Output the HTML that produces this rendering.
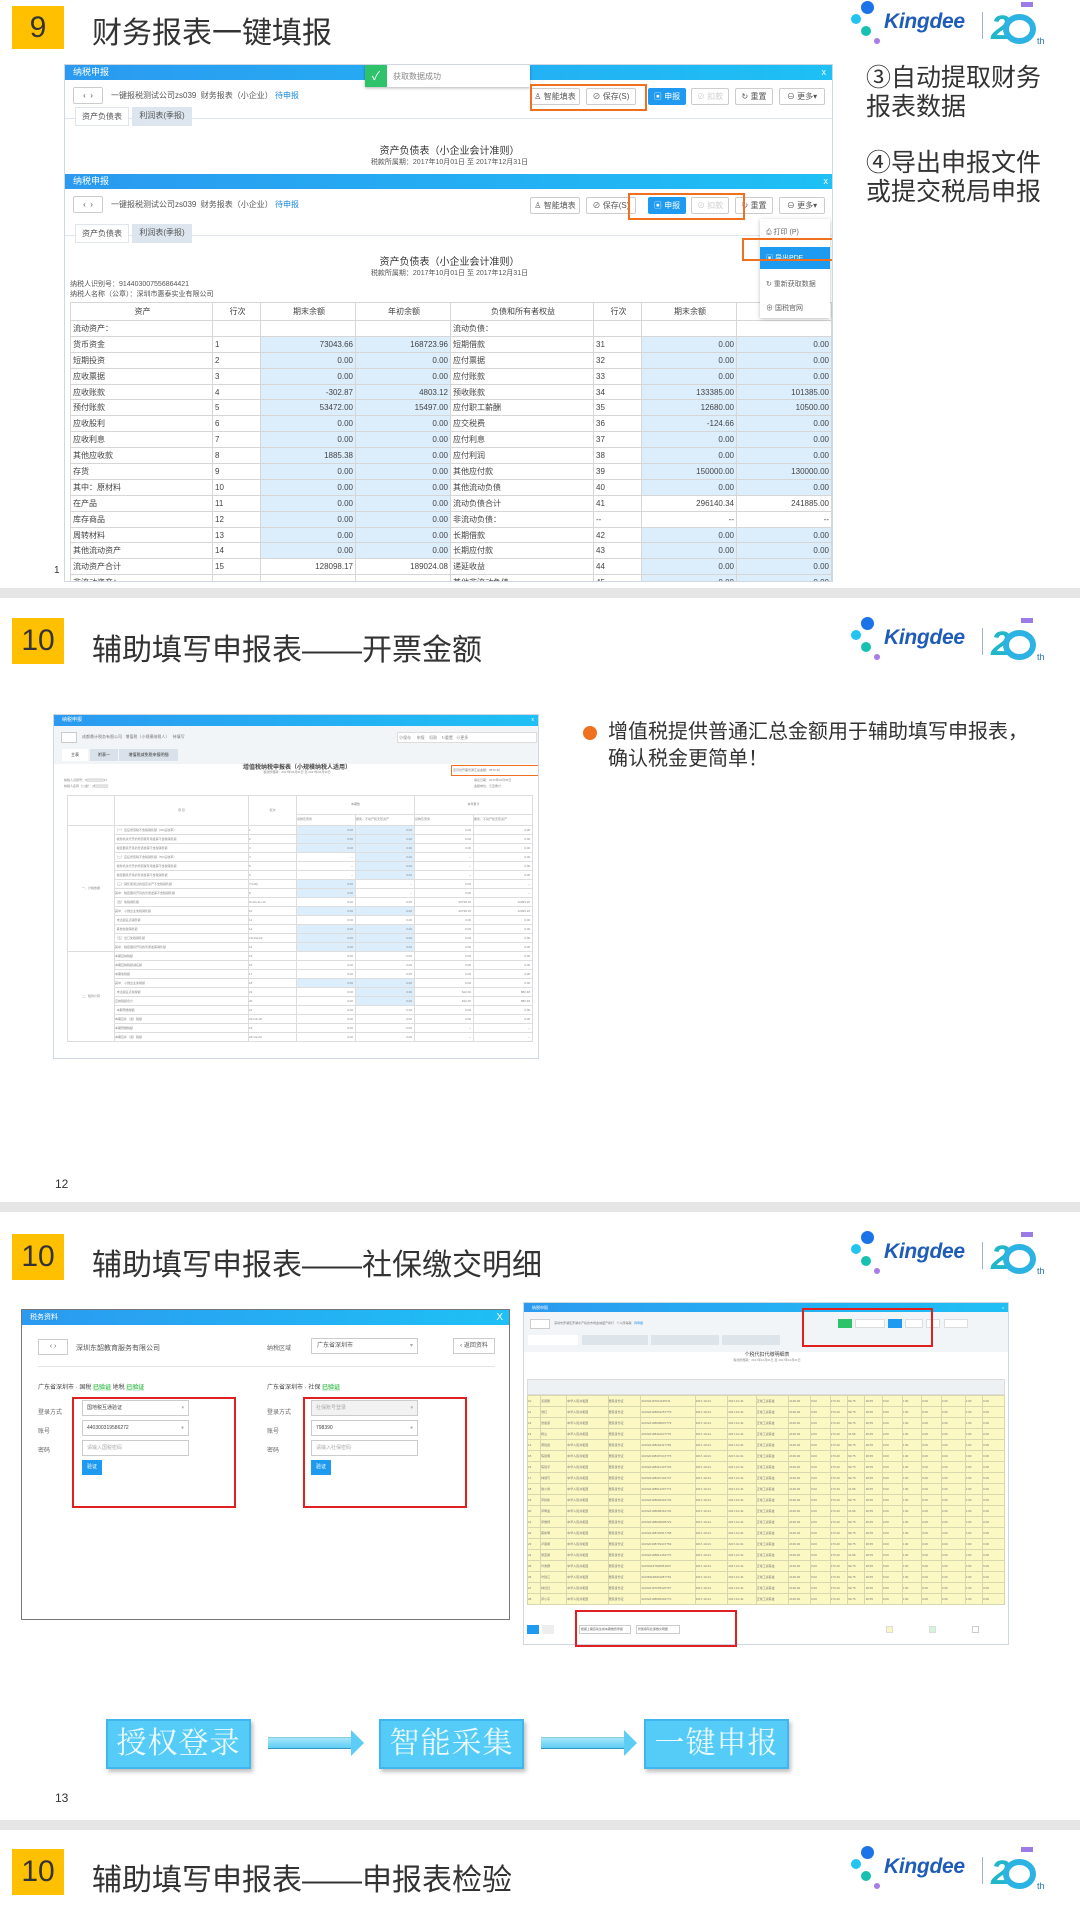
<!DOCTYPE html>
<html><head><meta charset="utf-8">
<style>
*{margin:0;padding:0;box-sizing:border-box}
body{width:1080px;height:1920px;background:#fff;position:relative;overflow:hidden;font-family:"Liberation Sans","Noto Sans CJK SC",sans-serif;color:#333}
.abs{position:absolute}
.num{position:absolute;left:12px;width:52px;background:#ffc000;color:#333;font-size:30px;display:flex;align-items:center;justify-content:center}
.title{position:absolute;left:92px;font-size:30px;color:#333}
.band{position:absolute;left:0;width:1080px;height:10px;background:#e6e6e6}
.logo{position:absolute;left:840px;width:240px;height:50px}
.logo .d{position:absolute;border-radius:50%}
.logo .k{position:absolute;left:44px;top:10px;font-size:21px;font-weight:bold;font-style:italic;color:#1f5cb8;letter-spacing:-0.3px}
.shot{position:absolute;border:1px solid #cfd8e0;background:#fff;overflow:hidden}
.bar{background:linear-gradient(90deg,#2b9af0,#1ec0f5);color:#fff;font-size:9px;padding-left:8px;position:absolute;left:0;right:0}
table{border-collapse:collapse;table-layout:fixed}
td{border:1px solid #d6d6d6;overflow:hidden;white-space:nowrap;padding:0}
.b{background:#dcedfc}
.r{text-align:right;padding-right:2px}
.t1 td{font-size:8px;height:15.9px;color:#444;padding-left:2px}
.t2 td{font-size:3px;line-height:3px;height:9px;color:#888;border-color:#ddd}
.t3 td{font-size:3px;line-height:3px;height:11px;color:#777;border-color:#d8d8b0;background:#fbf8c4}
.btn{position:absolute;height:17px;border:1px solid #ccc;border-radius:2px;font-size:8px;color:#555;background:#fff;text-align:center;line-height:15px}
.red{position:absolute;border:2px solid #e02020}
.org{position:absolute;border:2px solid #f07020}
.flow{position:absolute;top:1719px;width:145px;height:50px;background:#55cbf7;border:2px solid #3fb7ee;box-shadow:2px 3px 4px rgba(0,0,0,.25);color:#eafaff;font-size:30px;text-align:center;line-height:46px;font-family:"Liberation Serif","Noto Serif CJK SC",serif;letter-spacing:1px}
.arrow{position:absolute;top:1737px;height:12px;background:linear-gradient(#a8e6fb,#5ccdf5);border-top:1px solid #8cd;border-bottom:1px solid #39b}
.arrow:after{content:"";position:absolute;right:-12px;top:-8px;border-left:13px solid #5ccdf5;border-top:13px solid transparent;border-bottom:13px solid transparent}
.side{position:absolute;left:866px;font-size:25px;line-height:29px;color:#333}
</style></head><body>

<!-- ============ SLIDE 9 ============ -->
<div class="num" style="top:6px;height:43px">9</div>
<div class="title" style="top:8px">财务报表一键填报</div>
<div class="logo" style="top:0">
 <div class="d" style="left:21px;top:1px;width:13px;height:13px;background:#1a73e8"></div>
 <div class="d" style="left:11px;top:14px;width:10px;height:10px;background:#22c4f2"></div>
 <div class="d" style="left:21px;top:26px;width:10px;height:10px;background:#17c0b0"></div>
 <div class="d" style="left:34px;top:38px;width:6px;height:6px;background:#a77be8"></div>
 <div class="k">Kingdee</div>
 <div class="abs" style="left:142px;top:12px;width:1px;height:27px;background:#a0b4c8"></div>
 <div class="abs" style="left:151px;top:9px;font-size:34px;font-weight:bold;color:#21b6c8;font-style:italic">2</div>
 <div class="abs" style="left:163px;top:14px;width:33px;height:30px;border:6px solid #2cb3e4;border-radius:50%"></div>
 <div class="abs" style="left:181px;top:2px;width:12px;height:5px;background:#9b7be8"></div>
 <div class="abs" style="left:197px;top:36px;font-size:9px;color:#27a;">th</div>
</div>

<div class="shot" style="left:64px;top:64px;width:769px;height:518px">
 <div class="bar" style="top:0;height:15px;line-height:15px">纳税申报<span style="position:absolute;right:6px">x</span></div>
 <div class="btn" style="left:8px;top:22px;width:30px">‹ &nbsp;›</div>
 <div class="abs" style="left:46px;top:25px;font-size:8px;color:#555">一键报税测试公司zs039 &nbsp;财务报表（小企业） <span style="color:#1a8ae0">待申报</span></div>
 <div class="abs" style="left:300px;top:0;width:165px;height:22px;background:#fff;box-shadow:0 1px 3px rgba(0,0,0,.3)"><div style="width:22px;height:22px;background:#2ec36a;color:#fff;font-size:12px;text-align:center;line-height:22px">✓</div><div class="abs" style="left:28px;top:6px;font-size:8px;color:#888">获取数据成功</div></div>
 <div class="btn" style="left:465px;top:23px;width:50px">♙ 智能填表</div>
 <div class="btn" style="left:521px;top:23px;width:50px">⊘ 保存(S)</div>
 <div class="btn" style="left:583px;top:23px;width:38px;background:#1e9bf0;color:#fff;border-color:#1e9bf0">▣ 申报</div>
 <div class="btn" style="left:626px;top:23px;width:38px;color:#ccc">⊘ 扣款</div>
 <div class="btn" style="left:670px;top:23px;width:38px">↻ 重置</div>
 <div class="btn" style="left:714px;top:23px;width:46px">⊖ 更多▾</div>
 <div class="org" style="left:465px;top:19px;width:117px;height:27px"></div>
 <div class="abs" style="left:0;top:53px;width:769px;height:1px;background:#e0e6ec"></div>
 <div class="abs" style="left:10px;top:42px;width:54px;height:19px;background:#fff;border:1px solid #e0e6ec;font-size:8px;text-align:center;line-height:18px;color:#555">资产负债表</div>
 <div class="abs" style="left:67px;top:42px;width:60px;height:19px;background:#dde6ee;font-size:8px;text-align:center;line-height:18px;color:#555">利润表(季报)</div>
 <div class="abs" style="left:0;top:77px;width:769px;text-align:center;font-size:10px;color:#333">资产负债表（小企业会计准则）</div>
 <div class="abs" style="left:0;top:92px;width:769px;text-align:center;font-size:7px;color:#555">税款所属期：2017年10月01日 至 2017年12月31日</div>

 <div class="abs" style="left:0;top:109px;width:769px;height:409px;background:#fff">
  <div class="bar" style="top:0;height:15px;line-height:15px">纳税申报<span style="position:absolute;right:6px">x</span></div>
  <div class="btn" style="left:8px;top:22px;width:30px">‹ &nbsp;›</div>
  <div class="abs" style="left:46px;top:25px;font-size:8px;color:#555">一键报税测试公司zs039 &nbsp;财务报表（小企业） <span style="color:#1a8ae0">待申报</span></div>
  <div class="btn" style="left:465px;top:23px;width:50px">♙ 智能填表</div>
  <div class="btn" style="left:521px;top:23px;width:50px">⊘ 保存(S)</div>
  <div class="btn" style="left:583px;top:23px;width:38px;background:#1e9bf0;color:#fff;border-color:#1e9bf0">▣ 申报</div>
  <div class="btn" style="left:626px;top:23px;width:38px;color:#ccc">⊘ 扣款</div>
  <div class="btn" style="left:670px;top:23px;width:38px">↻ 重置</div>
  <div class="btn" style="left:714px;top:23px;width:46px">⊖ 更多▾</div>
  <div class="org" style="left:563px;top:19px;width:117px;height:27px"></div>
  <div class="abs" style="left:0;top:61px;width:769px;height:1px;background:#e0e6ec"></div>
  <div class="abs" style="left:10px;top:50px;width:54px;height:19px;background:#fff;border:1px solid #e0e6ec;font-size:8px;text-align:center;line-height:18px;color:#555">资产负债表</div>
  <div class="abs" style="left:67px;top:50px;width:60px;height:19px;background:#dde6ee;font-size:8px;text-align:center;line-height:18px;color:#555">利润表(季报)</div>
  <div class="abs" style="left:0;top:79px;width:769px;text-align:center;font-size:10px;color:#333">资产负债表（小企业会计准则）</div>
  <div class="abs" style="left:0;top:94px;width:769px;text-align:center;font-size:7px;color:#555">税款所属期：2017年10月01日 至 2017年12月31日</div>
  <div class="abs" style="left:5px;top:106px;font-size:7px;color:#555;line-height:10px">纳税人识别号：914403007556864421<br>纳税人名称（公章）：深圳市惠泰实业有限公司</div>
  <div class="abs" style="left:5px;top:128px">
  <table class="t1" style="width:761px">
   <colgroup><col style="width:142px"><col style="width:48px"><col style="width:95px"><col style="width:95px"><col style="width:143px"><col style="width:48px"><col style="width:95px"><col style="width:95px"></colgroup>
   <tr><td style="text-align:center;height:18px">资产</td><td style="text-align:center">行次</td><td style="text-align:center">期末余额</td><td style="text-align:center">年初余额</td><td style="text-align:center">负债和所有者权益</td><td style="text-align:center">行次</td><td style="text-align:center">期末余额</td><td style="text-align:center">年初余额</td></tr>
   <tr><td>流动资产：</td><td></td><td></td><td></td><td>流动负债：</td><td></td><td></td><td></td></tr>
   <tr><td>货币资金</td><td>1</td><td class="b r">73043.66</td><td class="b r">168723.96</td><td>短期借款</td><td>31</td><td class="b r">0.00</td><td class="b r">0.00</td></tr>
   <tr><td>短期投资</td><td>2</td><td class="b r">0.00</td><td class="b r">0.00</td><td>应付票据</td><td>32</td><td class="b r">0.00</td><td class="b r">0.00</td></tr>
   <tr><td>应收票据</td><td>3</td><td class="b r">0.00</td><td class="b r">0.00</td><td>应付账款</td><td>33</td><td class="b r">0.00</td><td class="b r">0.00</td></tr>
   <tr><td>应收账款</td><td>4</td><td class="b r">-302.87</td><td class="b r">4803.12</td><td>预收账款</td><td>34</td><td class="b r">133385.00</td><td class="b r">101385.00</td></tr>
   <tr><td>预付账款</td><td>5</td><td class="b r">53472.00</td><td class="b r">15497.00</td><td>应付职工薪酬</td><td>35</td><td class="b r">12680.00</td><td class="b r">10500.00</td></tr>
   <tr><td>应收股利</td><td>6</td><td class="b r">0.00</td><td class="b r">0.00</td><td>应交税费</td><td>36</td><td class="b r">-124.66</td><td class="b r">0.00</td></tr>
   <tr><td>应收利息</td><td>7</td><td class="b r">0.00</td><td class="b r">0.00</td><td>应付利息</td><td>37</td><td class="b r">0.00</td><td class="b r">0.00</td></tr>
   <tr><td>其他应收款</td><td>8</td><td class="b r">1885.38</td><td class="b r">0.00</td><td>应付利润</td><td>38</td><td class="b r">0.00</td><td class="b r">0.00</td></tr>
   <tr><td>存货</td><td>9</td><td class="b r">0.00</td><td class="b r">0.00</td><td>其他应付款</td><td>39</td><td class="b r">150000.00</td><td class="b r">130000.00</td></tr>
   <tr><td>其中：原材料</td><td>10</td><td class="b r">0.00</td><td class="b r">0.00</td><td>其他流动负债</td><td>40</td><td class="b r">0.00</td><td class="b r">0.00</td></tr>
   <tr><td>在产品</td><td>11</td><td class="b r">0.00</td><td class="b r">0.00</td><td>流动负债合计</td><td>41</td><td class="r">296140.34</td><td class="r">241885.00</td></tr>
   <tr><td>库存商品</td><td>12</td><td class="b r">0.00</td><td class="b r">0.00</td><td>非流动负债：</td><td>--</td><td class="r">--</td><td class="r">--</td></tr>
   <tr><td>周转材料</td><td>13</td><td class="b r">0.00</td><td class="b r">0.00</td><td>长期借款</td><td>42</td><td class="b r">0.00</td><td class="b r">0.00</td></tr>
   <tr><td>其他流动资产</td><td>14</td><td class="b r">0.00</td><td class="b r">0.00</td><td>长期应付款</td><td>43</td><td class="b r">0.00</td><td class="b r">0.00</td></tr>
   <tr><td>流动资产合计</td><td>15</td><td class="r">128098.17</td><td class="r">189024.08</td><td>递延收益</td><td>44</td><td class="b r">0.00</td><td class="b r">0.00</td></tr>
   <tr><td>非流动资产：</td><td>--</td><td class="r">--</td><td class="r">--</td><td>其他非流动负债</td><td>45</td><td class="b r">0.00</td><td class="b r">0.00</td></tr>
  </table></div>
  <div class="abs" style="left:695px;top:45px;width:70px;height:99px;background:#fff;box-shadow:0 1px 4px rgba(0,0,0,.25);font-size:7px;color:#666">
   <div style="padding:8px 6px">⎙ 打印 (P)</div>
   <div style="background:#1e9bf0;color:#fff;padding:6px 6px;margin-top:2px">▣ 导出PDF</div>
   <div style="padding:10px 6px 0">↻ 重新获取数据</div>
   <div style="padding:14px 6px 0">⊕ 国税官网</div>
  </div>
  <div class="org" style="left:677px;top:64px;width:116px;height:23px"></div>
 </div>
</div>
<div class="abs" style="left:54px;top:565px;font-size:10px">1</div>
<div class="side" style="top:64px">③自动提取财务<br>报表数据</div>
<div class="side" style="top:149px">④导出申报文件<br>或提交税局申报</div>

<div class="band" style="top:588px"></div>

<!-- ============ SLIDE 10a ============ -->
<div class="num" style="top:618px;height:46px">10</div>
<div class="title" style="top:625px">辅助填写申报表——开票金额</div>
<div class="logo" style="top:616px">
 <div class="d" style="left:21px;top:1px;width:13px;height:13px;background:#1a73e8"></div>
 <div class="d" style="left:11px;top:14px;width:10px;height:10px;background:#22c4f2"></div>
 <div class="d" style="left:21px;top:26px;width:10px;height:10px;background:#17c0b0"></div>
 <div class="d" style="left:34px;top:38px;width:6px;height:6px;background:#a77be8"></div>
 <div class="k">Kingdee</div>
 <div class="abs" style="left:142px;top:12px;width:1px;height:27px;background:#a0b4c8"></div>
 <div class="abs" style="left:151px;top:9px;font-size:34px;font-weight:bold;color:#21b6c8;font-style:italic">2</div>
 <div class="abs" style="left:163px;top:14px;width:33px;height:30px;border:6px solid #2cb3e4;border-radius:50%"></div>
 <div class="abs" style="left:181px;top:2px;width:12px;height:5px;background:#9b7be8"></div>
 <div class="abs" style="left:197px;top:36px;font-size:9px;color:#27a;">th</div>
</div>

<div class="shot" style="left:53px;top:714px;width:486px;height:345px">
 <div class="bar" style="top:0;height:11px;line-height:11px;font-size:5px">纳税申报<span style="position:absolute;right:4px">x</span></div>
 <div class="abs" style="left:0;top:11px;width:486px;height:38px;background:#f2f5f8"></div>
 <div class="abs" style="left:7px;top:17px;width:16px;height:11px;border:1px solid #ccc;background:#fff"></div>
 <div class="abs" style="left:28px;top:19px;font-size:4px;color:#777">成都鼎计税务有限公司 &nbsp; 增值税（小规模纳税人） &nbsp; 待填写</div>
 <div class="abs" style="left:343px;top:17px;width:140px;height:11px;border:1px solid #ddd;background:#fff;font-size:4px;color:#888;line-height:9px">&nbsp;⊘保存 &nbsp; &nbsp; 申报 &nbsp; &nbsp;扣款 &nbsp; &nbsp;↻重置 &nbsp; ⊖更多</div>
 <div class="abs" style="left:8px;top:34px;width:26px;height:12px;background:#fff;font-size:4px;text-align:center;line-height:12px">主表</div>
 <div class="abs" style="left:36px;top:34px;width:28px;height:12px;background:#d9e2ea;font-size:4px;text-align:center;line-height:12px">附表一</div>
 <div class="abs" style="left:65px;top:34px;width:59px;height:12px;background:#d9e2ea;font-size:4px;text-align:center;line-height:12px">增值税减免税申报明细</div>
 <div class="abs" style="left:0;top:47px;width:486px;text-align:center;font-size:6px;font-weight:bold;color:#444">增值税纳税申报表（小规模纳税人适用）</div>
 <div class="abs" style="left:0;top:55px;width:486px;text-align:center;font-size:3px;color:#888">税款所属期：2017年06月01日 至 2017年06月30日</div>
 <div class="org" style="left:397px;top:50px;width:90px;height:11px;border-width:1px"></div>
 <div class="abs" style="left:399px;top:53px;font-size:3px;color:#777">该月份开票普通汇总金额：3572.32</div>
 <div class="abs" style="left:10px;top:62px;font-size:3px;color:#888;line-height:6px">纳税人识别号：9▒▒▒▒▒▒▒▒97<br>纳税人名称（公章）：成▒▒▒▒▒▒</div>
 <div class="abs" style="left:420px;top:62px;font-size:3px;color:#888;line-height:6px">填表日期：2017年06月05日<br>金额单位：元至角分</div>
 <div class="abs" style="left:13px;top:80px">
 <table class="t2" style="width:465px">
  <colgroup><col style="width:47px"><col style="width:134px"><col style="width:48px"><col style="width:59px"><col style="width:59px"><col style="width:59px"><col style="width:59px"></colgroup>
  <tr><td rowspan="2" style="height:30px"></td><td rowspan="2" style="text-align:center">项 目</td><td rowspan="2" style="text-align:center">栏次</td><td colspan="2" style="text-align:center;height:15px">本期数</td><td colspan="2" style="text-align:center">本年累计</td></tr>
  <tr><td>货物及劳务</td><td>服务、不动产和无形资产</td><td>货物及劳务</td><td>服务、不动产和无形资产</td></tr>
  <tr><td rowspan="14" style="text-align:center">一、计税依据</td><td>（一）应征增值税不含税销售额（3%征收率）</td><td>1</td><td class="b r">0.00</td><td class="b r">0.00</td><td class="r">0.00</td><td class="r">0.00</td></tr>
  <tr><td>&nbsp; 税务机关代开的增值税专用发票不含税销售额</td><td>2</td><td class="b r">0.00</td><td class="b r">0.00</td><td class="r">0.00</td><td class="r">0.00</td></tr>
  <tr><td>&nbsp; 税控器具开具的普通发票不含税销售额</td><td>3</td><td class="b r">0.00</td><td class="b r">0.00</td><td class="r">0.00</td><td class="r">0.00</td></tr>
  <tr><td>（二）应征增值税不含税销售额（5%征收率）</td><td>4</td><td class="r">--</td><td class="b r">0.00</td><td class="r">--</td><td class="r">0.00</td></tr>
  <tr><td>&nbsp; 税务机关代开的增值税专用发票不含税销售额</td><td>5</td><td class="r">--</td><td class="b r">0.00</td><td class="r">--</td><td class="r">0.00</td></tr>
  <tr><td>&nbsp; 税控器具开具的普通发票不含税销售额</td><td>6</td><td class="r">--</td><td class="b r">0.00</td><td class="r">--</td><td class="r">0.00</td></tr>
  <tr><td>（三）销售使用过的固定资产不含税销售额</td><td>7(7≥8)</td><td class="b r">0.00</td><td class="r">--</td><td class="r">0.00</td><td class="r">--</td></tr>
  <tr><td>其中：税控器具开具的普通发票不含税销售额</td><td>8</td><td class="b r">0.00</td><td class="r">--</td><td class="r">0.00</td><td class="r">--</td></tr>
  <tr><td>（四）免税销售额</td><td>9=10+11+12</td><td class="r">0.00</td><td class="r">0.00</td><td class="r">29738.15</td><td class="r">10095.22</td></tr>
  <tr><td>其中：小微企业免税销售额</td><td>10</td><td class="b r">0.00</td><td class="b r">0.00</td><td class="r">29738.15</td><td class="r">10095.22</td></tr>
  <tr><td>&nbsp; 未达起征点销售额</td><td>11</td><td class="r">0.00</td><td class="r">0.00</td><td class="r">0.00</td><td class="r">0.00</td></tr>
  <tr><td>&nbsp; 其他免税销售额</td><td>12</td><td class="b r">0.00</td><td class="b r">0.00</td><td class="r">0.00</td><td class="r">0.00</td></tr>
  <tr><td>（五）出口免税销售额</td><td>13(13≥14)</td><td class="b r">0.00</td><td class="b r">0.00</td><td class="r">0.00</td><td class="r">0.00</td></tr>
  <tr><td>其中：税控器具开具的普通发票销售额</td><td>14</td><td class="b r">0.00</td><td class="b r">0.00</td><td class="r">0.00</td><td class="r">0.00</td></tr>
  <tr><td rowspan="10" style="text-align:center">二、税款计算</td><td>本期应纳税额</td><td>15</td><td class="r">0.00</td><td class="r">0.00</td><td class="r">0.00</td><td class="r">0.00</td></tr>
  <tr><td>本期应纳税额减征额</td><td>16</td><td class="r">0.00</td><td class="r">0.00</td><td class="r">0.00</td><td class="r">0.00</td></tr>
  <tr><td>本期免税额</td><td>17</td><td class="r">0.00</td><td class="r">0.00</td><td class="r">0.00</td><td class="r">0.00</td></tr>
  <tr><td>其中：小微企业免税额</td><td>18</td><td class="b r">0.00</td><td class="b r">0.00</td><td class="r">0.00</td><td class="r">0.00</td></tr>
  <tr><td>&nbsp; 未达起征点免税额</td><td>19</td><td class="r">0.00</td><td class="b r">0.00</td><td class="r">622.00</td><td class="r">880.48</td></tr>
  <tr><td>应纳税额合计</td><td>20</td><td class="r">0.00</td><td class="b r">0.00</td><td class="r">622.00</td><td class="r">880.48</td></tr>
  <tr><td>&nbsp; 本期预缴税额</td><td>21</td><td class="r">0.00</td><td class="r">0.00</td><td class="r">0.00</td><td class="r">0.00</td></tr>
  <tr><td>本期应补（退）税额</td><td>22=16-18</td><td class="r">0.00</td><td class="r">0.00</td><td class="r">0.00</td><td class="r">0.00</td></tr>
  <tr><td>本期预缴税额</td><td>23</td><td class="r">0.00</td><td class="r">0.00</td><td class="r">--</td><td class="r">--</td></tr>
  <tr><td>本期应补（退）税额</td><td>24=22-23</td><td class="r">0.00</td><td class="r">0.00</td><td class="r">--</td><td class="r">--</td></tr>
 </table></div>
</div>
<div class="abs" style="left:583px;top:726px;width:14px;height:14px;border-radius:50%;background:#f07020"></div>
<div class="abs" style="left:608px;top:719px;font-size:20px;line-height:27px;color:#333;width:420px">增值税提供普通汇总金额用于辅助填写申报表，确认税金更简单！</div>
<div class="abs" style="left:55px;top:1177px;font-size:12px">12</div>

<div class="band" style="top:1202px"></div>

<!-- ============ SLIDE 10b ============ -->
<div class="num" style="top:1234px;height:46px">10</div>
<div class="title" style="top:1240px">辅助填写申报表——社保缴交明细</div>
<div class="logo" style="top:1230px">
 <div class="d" style="left:21px;top:1px;width:13px;height:13px;background:#1a73e8"></div>
 <div class="d" style="left:11px;top:14px;width:10px;height:10px;background:#22c4f2"></div>
 <div class="d" style="left:21px;top:26px;width:10px;height:10px;background:#17c0b0"></div>
 <div class="d" style="left:34px;top:38px;width:6px;height:6px;background:#a77be8"></div>
 <div class="k">Kingdee</div>
 <div class="abs" style="left:142px;top:12px;width:1px;height:27px;background:#a0b4c8"></div>
 <div class="abs" style="left:151px;top:9px;font-size:34px;font-weight:bold;color:#21b6c8;font-style:italic">2</div>
 <div class="abs" style="left:163px;top:14px;width:33px;height:30px;border:6px solid #2cb3e4;border-radius:50%"></div>
 <div class="abs" style="left:181px;top:2px;width:12px;height:5px;background:#9b7be8"></div>
 <div class="abs" style="left:197px;top:36px;font-size:9px;color:#27a;">th</div>
</div>

<div class="shot" style="left:21px;top:1309px;width:489px;height:311px;border:1px solid #777">
 <div class="bar" style="top:0;height:15px;line-height:15px;font-size:7px">税务资料<span style="position:absolute;right:6px;font-size:10px">X</span></div>
 <div class="abs" style="left:16px;top:29px;width:30px;height:16px;border:1px solid #ccc;font-size:7px;text-align:center;line-height:14px;color:#666">‹ ›</div>
 <div class="abs" style="left:54px;top:33px;font-size:7px;color:#555">深圳东韶教育服务有限公司</div>
 <div class="abs" style="left:245px;top:33px;font-size:6px;color:#666">纳税区域</div>
 <div class="abs" style="left:289px;top:28px;width:107px;height:16px;border:1px solid #ccc;font-size:6px;color:#555;line-height:14px;padding-left:5px">广东省深圳市<span style="position:absolute;right:4px;color:#aaa">▾</span></div>
 <div class="abs" style="left:431px;top:28px;width:42px;height:16px;border:1px solid #ccc;font-size:6px;color:#555;line-height:14px;text-align:center">‹ 返回资料</div>
 <div class="abs" style="left:16px;top:56px;width:457px;height:1px;background:#e4e4e4"></div>
 <div class="abs" style="left:16px;top:72px;font-size:6px;color:#444">广东省深圳市 · 国税 <span style="background:#d8f4dc;color:#2bb040">已验证</span> 地税 <span style="background:#d8f4dc;color:#2bb040">已验证</span></div>
 <div class="abs" style="left:245px;top:72px;font-size:6px;color:#444">广东省深圳市 · 社保 <span style="background:#d8f4dc;color:#2bb040">已验证</span></div>
 <div class="abs" style="left:16px;top:94px;font-size:6px;color:#666;line-height:19px">登录方式<br>账号<br>密码</div>
 <div class="abs" style="left:245px;top:94px;font-size:6px;color:#666;line-height:19px">登录方式<br>账号<br>密码</div>
 <div class="abs" style="left:60px;top:90px;width:107px;height:16px;border:1px solid #ccc;font-size:5px;line-height:14px;padding-left:4px;color:#444">国地税互通验证<span style="position:absolute;right:4px;color:#aaa">▾</span></div>
 <div class="abs" style="left:60px;top:110px;width:107px;height:16px;border:1px solid #ccc;font-size:5px;line-height:14px;padding-left:4px;color:#444">440300319586272<span style="position:absolute;right:4px;color:#aaa">●</span></div>
 <div class="abs" style="left:60px;top:130px;width:107px;height:16px;border:1px solid #ccc;font-size:5px;line-height:14px;padding-left:4px;color:#aaa">请输入国税密码</div>
 <div class="abs" style="left:60px;top:150px;width:20px;height:15px;background:#1e9bf0;font-size:5px;color:#fff;text-align:center;line-height:15px">验证</div>
 <div class="abs" style="left:289px;top:90px;width:107px;height:16px;border:1px solid #ccc;background:#f2f2f2;font-size:5px;line-height:14px;padding-left:4px;color:#aaa">社保账号登录<span style="position:absolute;right:4px">▾</span></div>
 <div class="abs" style="left:289px;top:110px;width:107px;height:16px;border:1px solid #ccc;font-size:5px;line-height:14px;padding-left:4px;color:#444">798390<span style="position:absolute;right:4px;color:#aaa">●</span></div>
 <div class="abs" style="left:289px;top:130px;width:107px;height:16px;border:1px solid #ccc;font-size:5px;line-height:14px;padding-left:4px;color:#aaa">请输入社保密码</div>
 <div class="abs" style="left:289px;top:150px;width:20px;height:15px;background:#1e9bf0;font-size:5px;color:#fff;text-align:center;line-height:15px">验证</div>
</div>
<div class="red" style="left:72px;top:1397px;width:164px;height:111px"></div>
<div class="red" style="left:303px;top:1397px;width:164px;height:111px"></div>

<div class="shot" style="left:523px;top:1302px;width:486px;height:343px">
 <div class="bar" style="top:0;height:9px;line-height:9px;font-size:4px">纳税申报<span style="position:absolute;right:4px">x</span></div>
 <div class="abs" style="left:0;top:9px;width:486px;height:40px;background:#f2f5f8"></div>
 <div class="abs" style="left:6px;top:16px;width:20px;height:10px;border:1px solid #ccc;background:#fff"></div>
 <div class="abs" style="left:30px;top:18px;font-size:3px;color:#777">深圳市罗湖区罗湖水产综合市场金城盛产商行 &nbsp; 个人所得税 &nbsp; <span style="color:#1a8ae0">待申报</span></div>
 <div class="abs" style="left:314px;top:16px;width:14px;height:9px;background:#2ec36a"></div>
 <div class="abs" style="left:331px;top:16px;width:30px;height:9px;border:1px solid #ddd;background:#fff"></div>
 <div class="abs" style="left:364px;top:16px;width:14px;height:9px;background:#1e9bf0"></div>
 <div class="abs" style="left:381px;top:16px;width:18px;height:9px;border:1px solid #ddd;background:#fff"></div>
 <div class="abs" style="left:402px;top:16px;width:14px;height:9px;border:1px solid #ddd;background:#fff"></div>
 <div class="abs" style="left:420px;top:16px;width:24px;height:9px;border:1px solid #ddd;background:#fff"></div>
 <div class="abs" style="left:4px;top:32px;width:50px;height:10px;background:#fff"></div>
 <div class="abs" style="left:58px;top:32px;width:66px;height:10px;background:#dde4ea"></div>
 <div class="abs" style="left:127px;top:32px;width:68px;height:10px;background:#dde4ea"></div>
 <div class="abs" style="left:198px;top:32px;width:58px;height:10px;background:#dde4ea"></div>
 <div class="abs" style="left:0;top:48px;width:486px;text-align:center;font-size:5px;color:#444">个税代扣代缴明细表</div>
 <div class="abs" style="left:0;top:55px;width:486px;text-align:center;font-size:3px;color:#888">税款所属期：2017年10月01日 至 2017年10月31日</div>
 <div class="abs" style="left:3px;top:76px;width:478px;height:16px;background:#eef1f4;border:1px solid #ddd"></div>
 <div class="abs" style="left:3px;top:92px">
 <table class="t3" style="width:478px">
  <colgroup><col style="width:12px"><col style="width:24px"><col style="width:38px"><col style="width:30px"><col style="width:50px"><col style="width:30px"><col style="width:26px"><col style="width:30px"><col style="width:20px"><col style="width:18px"><col style="width:16px"><col style="width:16px"><col style="width:16px"><col style="width:18px"><col style="width:18px"><col style="width:18px"><col style="width:22px"><col style="width:16px"><col style="width:20px"></colgroup>
  <tr><td>10</td><td>姜康鹏</td><td>中华人民共和国</td><td>居民身份证</td><td>441522197011195711</td><td>2017-10-01</td><td>2017-10-31</td><td>正常工资薪金</td><td>2136.00</td><td>0.00</td><td>170.40</td><td>99.75</td><td>18.65</td><td>0.00</td><td>0.00</td><td>0.00</td><td>0.00</td><td>0.00</td><td>0.00</td></tr>
  <tr><td>11</td><td>谭红</td><td>中华人民共和国</td><td>居民身份证</td><td>441522198601257779</td><td>2017-10-01</td><td>2017-10-31</td><td>正常工资薪金</td><td>2136.00</td><td>0.00</td><td>170.40</td><td>99.75</td><td>18.65</td><td>0.00</td><td>0.00</td><td>0.00</td><td>0.00</td><td>0.00</td><td>0.00</td></tr>
  <tr><td>12</td><td>张俊恩</td><td>中华人民共和国</td><td>居民身份证</td><td>441522198608607779</td><td>2017-10-01</td><td>2017-10-31</td><td>正常工资薪金</td><td>2136.00</td><td>0.00</td><td>170.40</td><td>99.75</td><td>18.65</td><td>0.00</td><td>0.00</td><td>0.00</td><td>0.00</td><td>0.00</td><td>0.00</td></tr>
  <tr><td>13</td><td>杨山</td><td>中华人民共和国</td><td>居民身份证</td><td>441522198110107779</td><td>2017-10-01</td><td>2017-10-31</td><td>正常工资薪金</td><td>2136.00</td><td>0.00</td><td>170.40</td><td>14.96</td><td>18.65</td><td>0.00</td><td>0.00</td><td>0.00</td><td>0.00</td><td>0.00</td><td>0.00</td></tr>
  <tr><td>14</td><td>黄建政</td><td>中华人民共和国</td><td>居民身份证</td><td>441522198202117769</td><td>2017-10-01</td><td>2017-10-31</td><td>正常工资薪金</td><td>2136.00</td><td>0.00</td><td>170.40</td><td>99.75</td><td>18.65</td><td>0.00</td><td>0.00</td><td>0.00</td><td>0.00</td><td>0.00</td><td>0.00</td></tr>
  <tr><td>15</td><td>陈建明</td><td>中华人民共和国</td><td>居民身份证</td><td>441522198307247775</td><td>2017-10-01</td><td>2017-10-31</td><td>正常工资薪金</td><td>2136.00</td><td>0.00</td><td>170.40</td><td>99.75</td><td>18.65</td><td>0.00</td><td>0.00</td><td>0.00</td><td>0.00</td><td>0.00</td><td>0.00</td></tr>
  <tr><td>16</td><td>陈建平</td><td>中华人民共和国</td><td>居民身份证</td><td>441522198310107726</td><td>2017-10-01</td><td>2017-10-31</td><td>正常工资薪金</td><td>2136.00</td><td>0.00</td><td>170.40</td><td>99.75</td><td>18.65</td><td>0.00</td><td>0.00</td><td>0.00</td><td>0.00</td><td>0.00</td><td>0.00</td></tr>
  <tr><td>17</td><td>林培巧</td><td>中华人民共和国</td><td>居民身份证</td><td>441522198407104747</td><td>2017-10-01</td><td>2017-10-31</td><td>正常工资薪金</td><td>2136.00</td><td>0.00</td><td>170.40</td><td>99.75</td><td>18.65</td><td>0.00</td><td>0.00</td><td>0.00</td><td>0.00</td><td>0.00</td><td>0.00</td></tr>
  <tr><td>18</td><td>徐小春</td><td>中华人民共和国</td><td>居民身份证</td><td>441522198512307773</td><td>2017-10-01</td><td>2017-10-31</td><td>正常工资薪金</td><td>2136.00</td><td>0.00</td><td>170.40</td><td>14.96</td><td>18.65</td><td>0.00</td><td>0.00</td><td>0.00</td><td>0.00</td><td>0.00</td><td>0.00</td></tr>
  <tr><td>19</td><td>邓秋新</td><td>中华人民共和国</td><td>居民身份证</td><td>441522198602291733</td><td>2017-10-01</td><td>2017-10-31</td><td>正常工资薪金</td><td>2136.00</td><td>0.00</td><td>170.40</td><td>99.75</td><td>18.65</td><td>0.00</td><td>0.00</td><td>0.00</td><td>0.00</td><td>0.00</td><td>0.00</td></tr>
  <tr><td>20</td><td>邓再金</td><td>中华人民共和国</td><td>居民身份证</td><td>441522198608161734</td><td>2017-10-01</td><td>2017-10-31</td><td>正常工资薪金</td><td>2136.00</td><td>0.00</td><td>170.40</td><td>14.96</td><td>18.65</td><td>0.00</td><td>0.00</td><td>0.00</td><td>0.00</td><td>0.00</td><td>0.00</td></tr>
  <tr><td>21</td><td>邓维柯</td><td>中华人民共和国</td><td>居民身份证</td><td>441522198609095723</td><td>2017-10-01</td><td>2017-10-31</td><td>正常工资薪金</td><td>2136.00</td><td>0.00</td><td>170.40</td><td>99.75</td><td>18.65</td><td>0.00</td><td>0.00</td><td>0.00</td><td>0.00</td><td>0.00</td><td>0.00</td></tr>
  <tr><td>22</td><td>蔡新明</td><td>中华人民共和国</td><td>居民身份证</td><td>441522198702517768</td><td>2017-10-01</td><td>2017-10-31</td><td>正常工资薪金</td><td>2136.00</td><td>0.00</td><td>170.40</td><td>99.75</td><td>18.65</td><td>0.00</td><td>0.00</td><td>0.00</td><td>0.00</td><td>0.00</td><td>0.00</td></tr>
  <tr><td>23</td><td>卢丽娟</td><td>中华人民共和国</td><td>居民身份证</td><td>441522198709147769</td><td>2017-10-01</td><td>2017-10-31</td><td>正常工资薪金</td><td>2136.00</td><td>0.00</td><td>170.40</td><td>99.75</td><td>18.65</td><td>0.00</td><td>0.00</td><td>0.00</td><td>0.00</td><td>0.00</td><td>0.00</td></tr>
  <tr><td>24</td><td>吴亚娟</td><td>中华人民共和国</td><td>居民身份证</td><td>441522198812162770</td><td>2017-10-01</td><td>2017-10-31</td><td>正常工资薪金</td><td>2136.00</td><td>0.00</td><td>170.40</td><td>14.96</td><td>18.65</td><td>0.00</td><td>0.00</td><td>0.00</td><td>0.00</td><td>0.00</td><td>0.00</td></tr>
  <tr><td>25</td><td>叶秀群</td><td>中华人民共和国</td><td>居民身份证</td><td>441501197608051907</td><td>2017-10-01</td><td>2017-10-31</td><td>正常工资薪金</td><td>2136.00</td><td>0.00</td><td>170.40</td><td>99.75</td><td>18.65</td><td>0.00</td><td>0.00</td><td>0.00</td><td>0.00</td><td>0.00</td><td>0.00</td></tr>
  <tr><td>26</td><td>叶建江</td><td>中华人民共和国</td><td>居民身份证</td><td>441581198304287763</td><td>2017-10-01</td><td>2017-10-31</td><td>正常工资薪金</td><td>2136.00</td><td>0.00</td><td>170.40</td><td>99.75</td><td>18.65</td><td>0.00</td><td>0.00</td><td>0.00</td><td>0.00</td><td>0.00</td><td>0.00</td></tr>
  <tr><td>27</td><td>林壮红</td><td>中华人民共和国</td><td>居民身份证</td><td>441522197605120767</td><td>2017-10-01</td><td>2017-10-31</td><td>正常工资薪金</td><td>2136.00</td><td>0.00</td><td>170.40</td><td>99.75</td><td>18.65</td><td>0.00</td><td>0.00</td><td>0.00</td><td>0.00</td><td>0.00</td><td>0.00</td></tr>
  <tr><td>28</td><td>邓小东</td><td>中华人民共和国</td><td>居民身份证</td><td>441522198506304770</td><td>2017-10-01</td><td>2017-10-31</td><td>正常工资薪金</td><td>2136.00</td><td>0.00</td><td>170.40</td><td>99.75</td><td>18.65</td><td>0.00</td><td>0.00</td><td>0.00</td><td>0.00</td><td>0.00</td><td>0.00</td></tr>
 </table></div>
 <div class="abs" style="left:3px;top:322px;width:12px;height:9px;background:#1e9bf0"></div>
 <div class="abs" style="left:18px;top:322px;width:12px;height:9px;background:#eee"></div>
 <div class="abs" style="left:55px;top:322px;width:52px;height:9px;border:1px solid #ccc;font-size:3px;line-height:7px;color:#666">&nbsp;根据上期自动生成本期缴费申报</div>
 <div class="abs" style="left:112px;top:322px;width:44px;height:9px;border:1px solid #ccc;font-size:3px;line-height:7px;color:#666">&nbsp;智能填写社保缴交明细</div>
 <div class="abs" style="left:362px;top:323px;width:7px;height:7px;background:#fbf6c0;border:1px solid #ddd"></div>
 <div class="abs" style="left:405px;top:323px;width:7px;height:7px;background:#d4f5dc;border:1px solid #ddd"></div>
 <div class="abs" style="left:448px;top:323px;width:7px;height:7px;background:#fff;border:1px solid #ccc"></div>
</div>
<div class="red" style="left:802px;top:1308px;width:131px;height:39px"></div>
<div class="red" style="left:575px;top:1610px;width:162px;height:37px"></div>

<div class="flow" style="left:106px">授权登录</div>
<div class="arrow" style="left:268px;width:84px"></div>
<div class="flow" style="left:379px">智能采集</div>
<div class="arrow" style="left:541px;width:84px"></div>
<div class="flow" style="left:644px">一键申报</div>
<div class="abs" style="left:55px;top:1791px;font-size:12px">13</div>

<div class="band" style="top:1820px"></div>

<!-- ============ SLIDE 10c ============ -->
<div class="num" style="top:1849px;height:46px">10</div>
<div class="title" style="top:1855px">辅助填写申报表——申报表检验</div>
<div class="logo" style="top:1845px">
 <div class="d" style="left:21px;top:1px;width:13px;height:13px;background:#1a73e8"></div>
 <div class="d" style="left:11px;top:14px;width:10px;height:10px;background:#22c4f2"></div>
 <div class="d" style="left:21px;top:26px;width:10px;height:10px;background:#17c0b0"></div>
 <div class="d" style="left:34px;top:38px;width:6px;height:6px;background:#a77be8"></div>
 <div class="k">Kingdee</div>
 <div class="abs" style="left:142px;top:12px;width:1px;height:27px;background:#a0b4c8"></div>
 <div class="abs" style="left:151px;top:9px;font-size:34px;font-weight:bold;color:#21b6c8;font-style:italic">2</div>
 <div class="abs" style="left:163px;top:14px;width:33px;height:30px;border:6px solid #2cb3e4;border-radius:50%"></div>
 <div class="abs" style="left:181px;top:2px;width:12px;height:5px;background:#9b7be8"></div>
 <div class="abs" style="left:197px;top:36px;font-size:9px;color:#27a;">th</div>
</div>
</body></html>
